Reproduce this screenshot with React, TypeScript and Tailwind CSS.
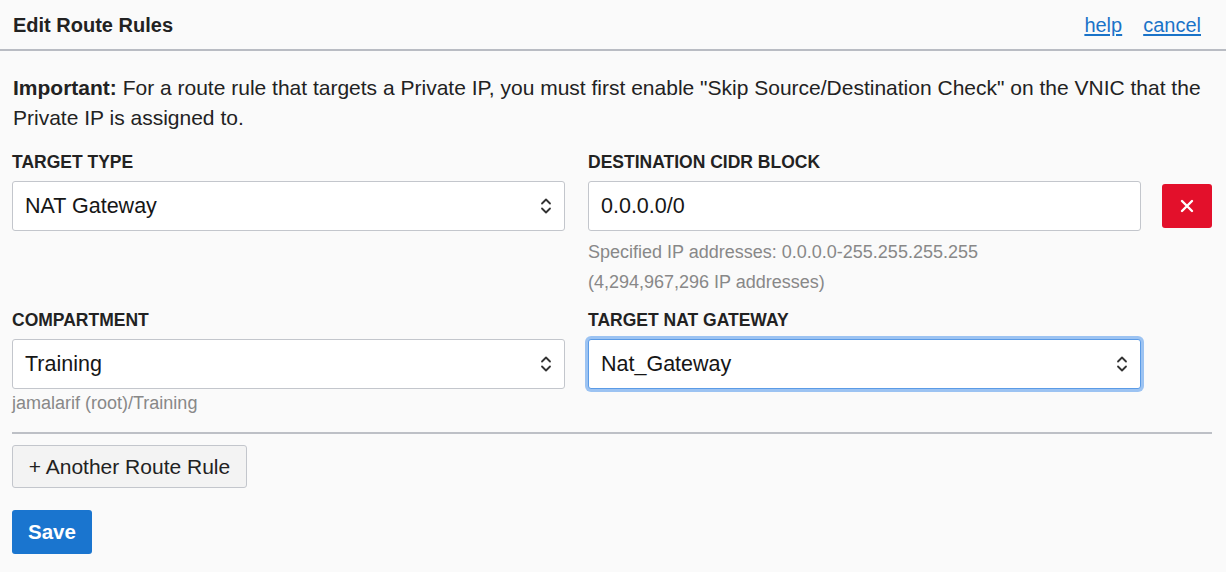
import React from "react";

function Chevrons() {
  return (
    <svg width="12" height="20" viewBox="0 0 12 20" fill="none" stroke="#333" strokeWidth="1.8" strokeLinecap="round" strokeLinejoin="round">
      <path d="M2 7.5 L6 3.5 L10 7.5" />
      <path d="M2 12.5 L6 16.5 L10 12.5" />
    </svg>
  );
}

function Select({ value, focused }: { value: string; focused?: boolean }) {
  return (
    <div
      className={
        "flex h-[50px] items-center justify-between rounded-[3px] bg-white pl-[12px] pr-[12px] text-[21.5px] text-[#161616] " +
        (focused
          ? "border border-[#5b9be6] shadow-[0_0_0_3px_#9cc3f2]"
          : "border border-[#c3c6cc]")
      }
    >
      <span>{value}</span>
      <Chevrons />
    </div>
  );
}

export default function App() {
  return (
    <div
      className="min-h-[572px] w-[1226px] bg-[#fafafa] text-[#333]"
      style={{ fontFamily: '"Liberation Sans", Arial, sans-serif' }}
    >
      <div className="flex h-[51px] items-center justify-between border-b-2 border-[#b9bcc3] pl-[13px] pr-[25px]">
        <h1 className="text-[20px] font-bold text-[#222]">Edit Route Rules</h1>
        <div className="flex gap-[21px] text-[20px] text-[#1a73c8]">
          <a className="underline underline-offset-2" href="#">help</a>
          <a className="underline underline-offset-2" href="#">cancel</a>
        </div>
      </div>

      <div className="pl-[12px] pr-[14px]">
        <p className="mt-[22px] whitespace-nowrap pl-[1px] text-[21px] leading-[30px] text-[#222]">
          <b>Important:</b> For a route rule that targets a Private IP, you must first enable "Skip Source/Destination Check" on the VNIC that the
          <br />
          Private IP is assigned to.
        </p>

        <div className="mt-[19px] grid grid-cols-[553px_553px_50px] gap-x-[23px]">
          <div>
            <div className="mb-[9px] text-[17.5px] font-bold leading-[20px] text-[#222]">TARGET TYPE</div>
            <Select value="NAT Gateway" />
          </div>
          <div>
            <div className="mb-[9px] text-[17.5px] font-bold leading-[20px] text-[#222]">DESTINATION CIDR BLOCK</div>
            <div className="flex h-[50px] items-center rounded-[3px] border border-[#c3c6cc] bg-white pl-[12px] text-[21.5px] text-[#161616]">
              0.0.0.0/0
            </div>
            <div className="mt-[6px] text-[18px] leading-[30px] text-[#888]">
              Specified IP addresses: 0.0.0.0-255.255.255.255
              <br />
              (4,294,967,296 IP addresses)
            </div>
          </div>
          <div className="-ml-[2px] pt-[32px]">
            <button className="flex h-[44px] w-[50px] items-center justify-center rounded-[3px] bg-[#e3102b]">
              <svg width="16" height="16" viewBox="0 0 16 16" stroke="white" strokeWidth="2.4" strokeLinecap="round">
                <path d="M3 3 L13 13 M13 3 L3 13" />
              </svg>
            </button>
          </div>
        </div>

        <div className="mt-[13px] grid grid-cols-[553px_553px] gap-x-[23px]">
          <div>
            <div className="mb-[9px] text-[17.5px] font-bold leading-[20px] text-[#222]">COMPARTMENT</div>
            <Select value="Training" />
            <div className="mt-[2px] text-[18px] leading-[24px] text-[#888]">jamalarif (root)/Training</div>
          </div>
          <div>
            <div className="mb-[9px] text-[17.5px] font-bold leading-[20px] text-[#222]">TARGET NAT GATEWAY</div>
            <Select value="Nat_Gateway" focused />
          </div>
        </div>

        <div className="mt-[17px] h-[2px] bg-[#bdc0c6]" />

        <button className="mt-[11px] flex h-[43px] w-[235px] items-center justify-center rounded-[3px] border border-[#c3c6cc] bg-[#f3f3f3] text-[21px] text-[#222]">
          + Another Route Rule
        </button>

        <button className="mt-[22px] flex h-[44px] w-[80px] items-center justify-center rounded-[3px] bg-[#1a75cf] text-[20.5px] font-bold text-white">
          Save
        </button>
      </div>
    </div>
  );
}
